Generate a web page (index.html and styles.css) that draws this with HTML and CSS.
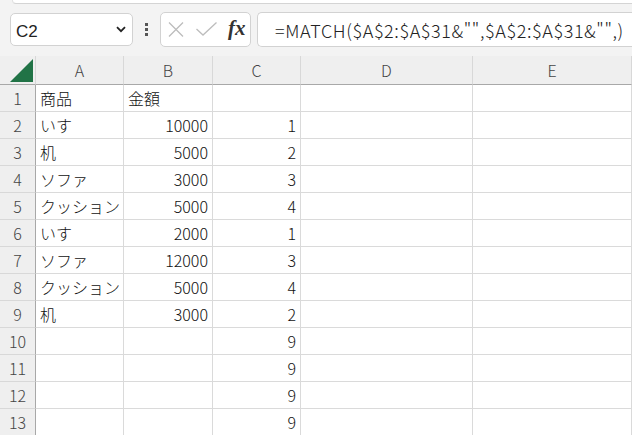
FILE: index.html
```html
<!DOCTYPE html>
<html lang="ja">
<head>
<meta charset="utf-8">
<link rel="stylesheet" href="styles.css">
</head>
<body>
<div class="ribbon-edge"></div>
<div class="toolbar">
  <div class="namebox">
    <span class="name">C2</span>
    <svg class="chev" width="10" height="7" viewBox="0 0 10 7"><path d="M1 1.2 L5 5.2 L9 1.2" fill="none" stroke="#222" stroke-width="1.8"/></svg>
  </div>
  <div class="dots"><i></i><i></i><i></i></div>
  <div class="btnbox">
    <svg class="x" width="16" height="15" viewBox="0 0 16 15"><path d="M1 0.5 L15 14.5 M15 0.5 L1 14.5" stroke="#bdbdbd" stroke-width="1.3" fill="none"/></svg>
    <svg class="ok" width="21" height="14" viewBox="0 0 21 14"><path d="M0.5 7 L7 13 L20.5 0.5" stroke="#bdbdbd" stroke-width="1.3" fill="none"/></svg>
    <span class="fx">fx</span>
  </div>
  <div class="formula">=MATCH($A$2:$A$31&amp;"",$A$2:$A$31&amp;"",)</div>
</div>
<div class="sheet">
  <div class="corner"><svg width="23" height="23" viewBox="0 0 23 23"><path d="M0 23 L23 23 L23 0 Z" fill="#217346"/></svg></div>
  <div class="ch">A</div><div class="ch">B</div><div class="ch">C</div><div class="ch">D</div><div class="ch">E</div>

  <div class="rh">1</div><div class="c">商品</div><div class="c">金額</div><div class="c n"></div><div class="c"></div><div class="c"></div>
  <div class="rh">2</div><div class="c">いす</div><div class="c n">10000</div><div class="c n">1</div><div class="c"></div><div class="c"></div>
  <div class="rh">3</div><div class="c">机</div><div class="c n">5000</div><div class="c n">2</div><div class="c"></div><div class="c"></div>
  <div class="rh">4</div><div class="c">ソファ</div><div class="c n">3000</div><div class="c n">3</div><div class="c"></div><div class="c"></div>
  <div class="rh">5</div><div class="c">クッション</div><div class="c n">5000</div><div class="c n">4</div><div class="c"></div><div class="c"></div>
  <div class="rh">6</div><div class="c">いす</div><div class="c n">2000</div><div class="c n">1</div><div class="c"></div><div class="c"></div>
  <div class="rh">7</div><div class="c">ソファ</div><div class="c n">12000</div><div class="c n">3</div><div class="c"></div><div class="c"></div>
  <div class="rh">8</div><div class="c">クッション</div><div class="c n">5000</div><div class="c n">4</div><div class="c"></div><div class="c"></div>
  <div class="rh">9</div><div class="c">机</div><div class="c n">3000</div><div class="c n">2</div><div class="c"></div><div class="c"></div>
  <div class="rh">10</div><div class="c"></div><div class="c n"></div><div class="c n">9</div><div class="c"></div><div class="c"></div>
  <div class="rh">11</div><div class="c"></div><div class="c n"></div><div class="c n">9</div><div class="c"></div><div class="c"></div>
  <div class="rh">12</div><div class="c"></div><div class="c n"></div><div class="c n">9</div><div class="c"></div><div class="c"></div>
  <div class="rh">13</div><div class="c"></div><div class="c n"></div><div class="c n">9</div><div class="c"></div><div class="c"></div>
</div>
</body>
</html>
```

FILE: styles.css
```css
html, body {
  margin: 0;
  padding: 0;
  background: #f3f3f3;
  overflow: hidden;
  width: 632px;
  height: 435px;
  font-family: "Noto Sans CJK JP", "Noto Sans", sans-serif;
  font-weight: 300;
}
.ribbon-edge {
  height: 3px;
  margin-left: 12px;
  background: #fff;
  border-bottom: 1px solid #d4d4d4;
  border-left: 1px solid #e0e0e0;
  border-bottom-left-radius: 6px;
}
.toolbar {
  display: flex;
  align-items: center;
  height: 35px;
  margin-top: 8px;
  padding-left: 10px;
}
.namebox {
  width: 123px;
  height: 33px;
  box-sizing: border-box;
  border: 1px solid #d2d2d2;
  border-radius: 5px;
  background: #fff;
  display: flex;
  align-items: center;
  justify-content: space-between;
  padding: 0 6px 0 5px;
}
.name {
  font-family: "Liberation Sans", Arial, sans-serif;
  font-weight: 400;
  font-size: 17px;
  color: #222;
  margin-top: 4px;
}
.chev { display: block; }
.dots {
  width: 27px;
  display: flex;
  flex-direction: column;
  align-items: center;
  gap: 2px;
}
.dots i {
  display: block;
  width: 3px;
  height: 3px;
  background: #555;
}
.btnbox {
  width: 91px;
  height: 35px;
  box-sizing: border-box;
  border: 1px solid #d2d2d2;
  border-radius: 5px;
  background: #fff;
  display: flex;
  align-items: center;
  padding-left: 7px;
}
.btnbox .x { margin-right: 12px; }
.btnbox .ok { margin-right: 11px; margin-top: -1px; }
.fx {
  font-family: "Liberation Serif", "DejaVu Serif", serif;
  font-style: italic;
  font-weight: bold;
  font-size: 21px;
  color: #333;
  margin-top: -3px;
}
.formula {
  flex: 1;
  margin-left: 6px;
  height: 35px;
  box-sizing: border-box;
  border: 1px solid #d2d2d2;
  border-right: none;
  border-radius: 5px 0 0 5px;
  background: #fff;
  padding-left: 17px;
  display: flex;
  align-items: center;
  font-family: "Noto Sans CJK JP", "Liberation Sans", sans-serif;
  font-size: 18px;
  letter-spacing: 0.6px;
  color: #222;
  white-space: nowrap;
  overflow: hidden;
}
.sheet {
  margin-top: 9px;
  display: grid;
  grid-template-columns: 36px 88px 89px 88px 172px 1fr;
  grid-template-rows: 29px repeat(13, 27px);
}
.corner {
  border-right: 1px solid #d8d8d8;
  border-bottom: 1px solid #a8a8a8;
  background: #efefef;
  display: flex;
  align-items: flex-end;
  padding: 0 0 2px 10px;
}
.corner svg { display: block; }
.ch {
  background: #efefef;
  border-right: 1px solid #d8d8d8;
  border-bottom: 1px solid #a8a8a8;
  text-align: center;
  color: #444;
  font-size: 16px;
  line-height: 28px;
}
.rh {
  background: #efefef;
  border-right: 1px solid #a8a8a8;
  border-bottom: 1px solid #d8d8d8;
  text-align: center;
  color: #444;
  font-size: 16px;
  line-height: 27px;
}
.c {
  background: #fff;
  border-right: 1px solid #dadada;
  border-bottom: 1px solid #dadada;
  font-size: 16px;
  line-height: 27px;
  padding-left: 4px;
  color: #111;
  white-space: nowrap;
  overflow: visible;
}
.c.n {
  text-align: right;
  padding-left: 0;
  padding-right: 4px;
}
```
